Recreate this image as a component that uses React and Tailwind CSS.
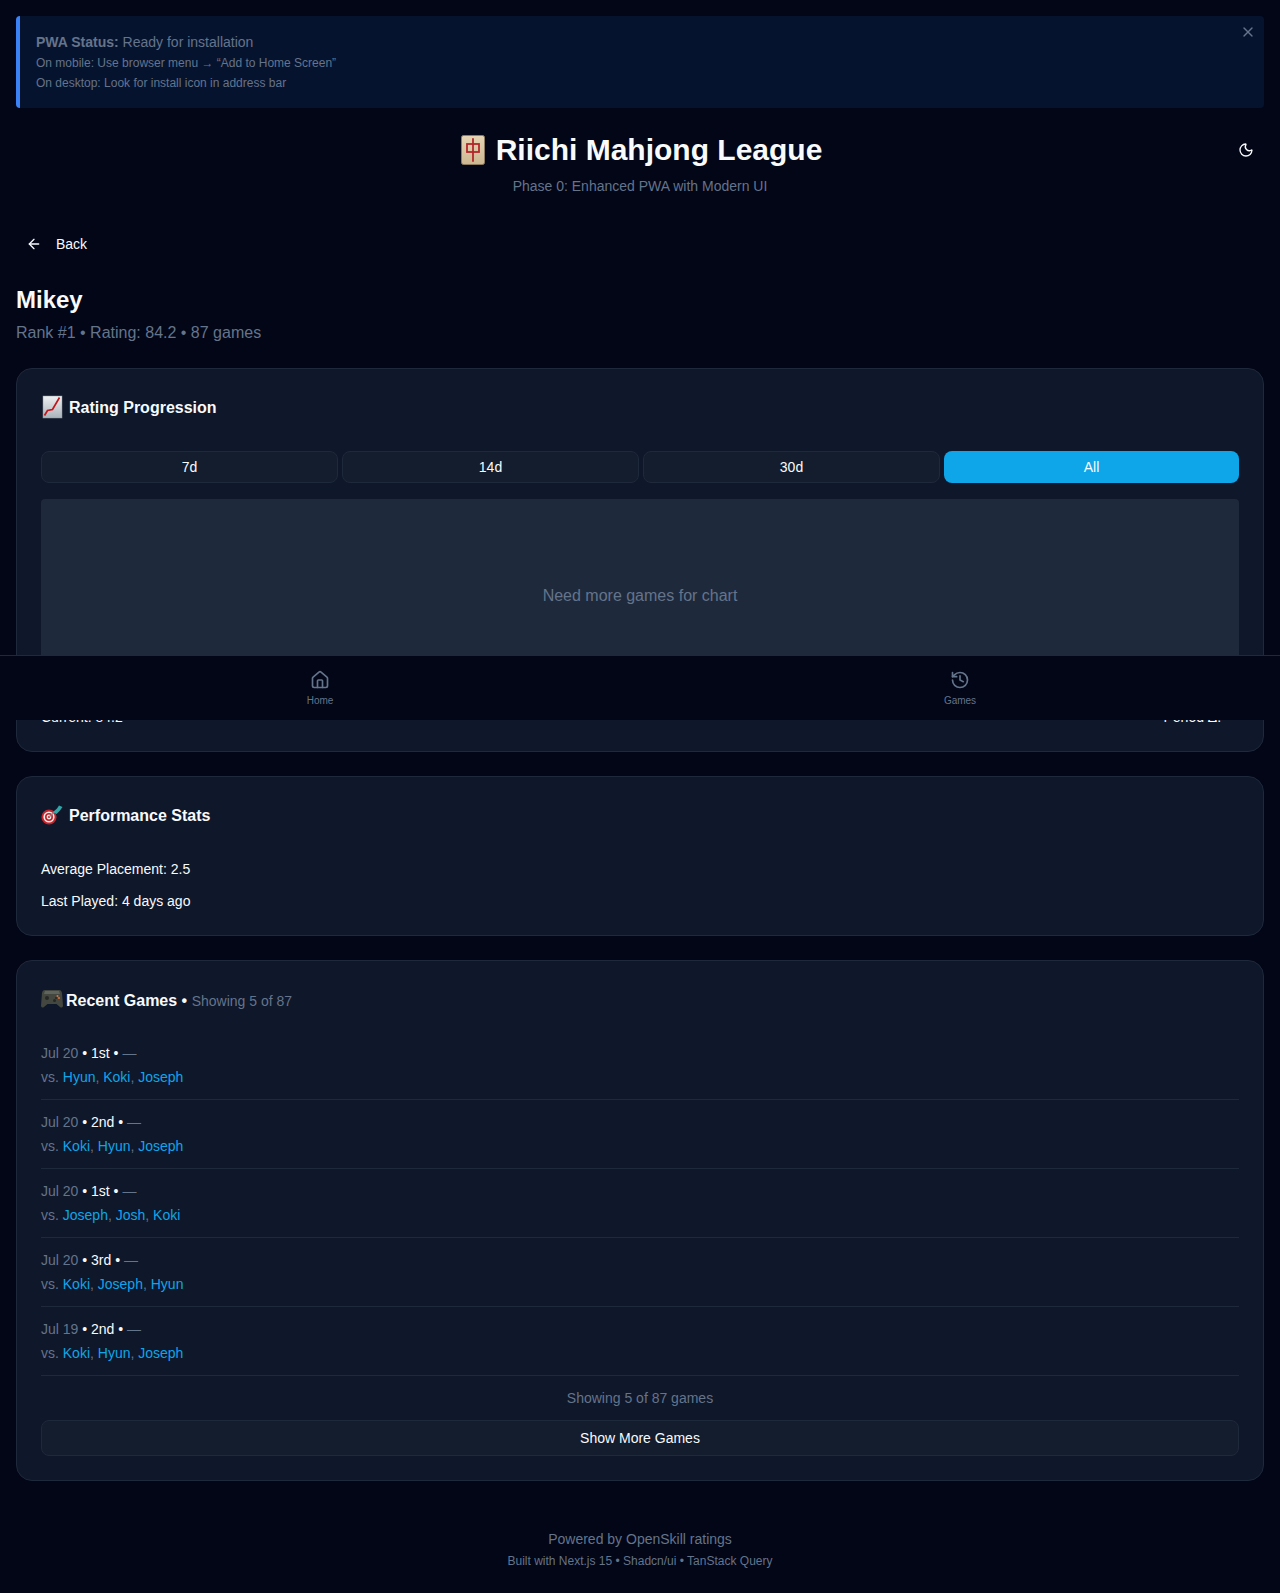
import { ArrowLeft, History, House, Moon, X } from "lucide-react";

const games = [
  { date: "Jul 20", place: "1st", opponents: ["Hyun", "Koki", "Joseph"] },
  { date: "Jul 20", place: "2nd", opponents: ["Koki", "Hyun", "Joseph"] },
  { date: "Jul 20", place: "1st", opponents: ["Joseph", "Josh", "Koki"] },
  { date: "Jul 20", place: "3rd", opponents: ["Koki", "Joseph", "Hyun"] },
  { date: "Jul 19", place: "2nd", opponents: ["Koki", "Hyun", "Joseph"] },
];

// the reference's emoji come from another emoji font, so they are drawn here
const TileIcon = () => (
  <svg viewBox="0 0 30 30" className="mr-2 h-[30px] w-[30px] shrink-0">
    <defs>
      <linearGradient id="tile" x1="0" y1="0" x2="0" y2="1">
        <stop offset="0" stopColor="#e6d4b4" />
        <stop offset="1" stopColor="#cdb792" />
      </linearGradient>
    </defs>
    <rect x="3.5" y="0.5" width="23" height="29" rx="2" fill="url(#tile)" stroke="#8d7c60" />
    <rect x="9" y="9" width="12" height="8" fill="none" stroke="#b3262b" strokeWidth="1.8" />
    <path d="M15 4v22" stroke="#b3262b" strokeWidth="1.8" strokeLinecap="round" />
  </svg>
);

const ChartIcon = () => (
  <svg viewBox="0 0 22 24" className="mr-[6px] h-6 w-[22px] shrink-0">
    <defs>
      <linearGradient id="chart" x1="0" y1="0" x2="0" y2="1">
        <stop offset="0" stopColor="#eef1f3" />
        <stop offset="1" stopColor="#aab2b9" />
      </linearGradient>
    </defs>
    <rect x="2" y="1" width="19" height="22" fill="url(#chart)" stroke="#8f98a0" strokeWidth="0.5" />
    <path d="M3.5 20.5 6.5 15.5 11.5 14.5 18.5 2.5" fill="none" stroke="#c3151b" strokeWidth="1.7" />
  </svg>
);

const DartIcon = () => (
  <svg viewBox="0 0 22 20" className="mr-[6px] h-5 w-[22px] shrink-0">
    <circle cx="8" cy="12" r="7.6" fill="#c4232b" />
    <circle cx="8" cy="12" r="5.6" fill="#f3e9e6" />
    <circle cx="8" cy="12" r="4" fill="#c4232b" />
    <circle cx="8" cy="12" r="2.4" fill="#f3e9e6" />
    <circle cx="8" cy="12" r="1.1" fill="#c4232b" />
    <path d="M8 12 14 6.500" stroke="#7d8c94" strokeWidth="1.2" />
    <path d="M12 7 16 3.500 18 0.500 21.500 2 19 5.500 15.500 9Z" fill="#2fa6a8" />
  </svg>
);

const PadIcon = () => (
  <svg viewBox="0 0 22 20" className="mr-[3px] h-5 w-[22px] shrink-0">
    <path
      d="M4 1h14c1.6 0 2.6 1 3 3l1 12.5c.1 2-1.8 2.6-3 1.5l-3.5-3h-9L3 18c-1.2 1.100-3.100.5-3-1.500L1 4c.4-2 1.400-3 3-3Z"
      fill="#43473f"
    />
    <path d="M4 2h14l1 3H3Z" fill="#5f645c" />
    <circle cx="6" cy="9" r="2" fill="#252824" />
    <circle cx="13.500" cy="11.500" r="1.500" fill="#252824" />
    <circle cx="16.500" cy="7" r="1" fill="#e2703a" />
    <circle cx="18" cy="9" r="1" fill="#e2703a" />
    <circle cx="15" cy="9" r="1" fill="#252824" />
  </svg>
);

const Card = ({ children }) => (
  <div className="rounded-2xl border border-[#1e293b] bg-[#0f172a] p-6">{children}</div>
);

const RangeButton = ({ label, active }) => (
  <button
    className={
      active
        ? "h-8 flex-1 rounded-lg bg-[#0ea5e9] text-sm text-[#f8fafc]"
        : "h-8 flex-1 rounded-lg border border-[#1e293b] bg-[#141d2e] text-sm text-[#f8fafc]"
    }
  >
    {label}
  </button>
);

const GameRow = ({ game }) => (
  <div className="border-b border-[#1e293b] py-[10px] text-sm leading-6">
    <div>
      <span className="text-[#64748b]">{game.date}</span>
      <span> • {game.place} • </span>
      <span className="text-[#64748b]">—</span>
    </div>
    <div className="text-[#64748b]">
      vs.{" "}
      {game.opponents.map((name, i) => (
        <span key={name}>
          <span className="text-[#0ea5e9]">{name}</span>
          {i < game.opponents.length - 1 && ", "}
        </span>
      ))}
    </div>
  </div>
);

const NavItem = ({ icon: Icon, label }) => (
  <div className="flex flex-1 flex-col items-center pt-[14px] text-[#64748b]">
    <Icon className="h-5 w-5" strokeWidth={2} />
    <span className="mt-[3px] text-[10px] leading-[15px]">{label}</span>
  </div>
);

export default function App() {
  return (
    <div className="relative h-[1593px] overflow-hidden bg-[#020617] p-4 font-['Liberation_Sans',Arial,sans-serif] text-[#f8fafc]">
      {/* install banner */}
      <div className="relative h-[92px] rounded border-l-4 border-[#3b82f6] bg-[#06132f] p-4">
        <p className="text-sm leading-5 text-[#64748b]">
          <strong>PWA Status:</strong> Ready for installation
        </p>
        <p className="mt-px text-xs leading-5 text-[#64748b]">On mobile: Use browser menu → “Add to Home Screen”</p>
        <p className="text-xs leading-5 text-[#64748b]">On desktop: Look for install icon in address bar</p>
        <X className="absolute top-2 right-2 h-4 w-4 text-[#64748b]" />
      </div>

      {/* header */}
      <div className="relative mt-6 text-center">
        <h1 className="flex items-center justify-center text-3xl leading-9 font-bold">
          <TileIcon />
          Riichi Mahjong League
        </h1>
        <p className="mt-2 text-sm leading-5 text-[#64748b]">Phase 0: Enhanced PWA with Modern UI</p>
        <Moon className="absolute top-[10px] right-[10px] h-4 w-4" />
      </div>

      <div className="mt-[30px] flex h-9 items-center pl-[10px] text-sm">
        <ArrowLeft className="mr-[14px] h-4 w-4" />
        Back
      </div>

      <h2 className="mt-[22px] text-2xl leading-8 font-bold">Mikey</h2>
      <p className="mt-[5px] text-base leading-6 text-[#64748b]">Rank #1 • Rating: 84.2 • 87 games</p>

      <div className="mt-[23px] flex flex-col gap-6">
        <Card>
          <h3 className="flex h-7 items-center text-base font-bold">
            <ChartIcon />
            <span className="pt-[2px]">Rating Progression</span>
          </h3>
          <div className="mt-[30px] flex gap-1">
            <RangeButton label="7d" />
            <RangeButton label="14d" />
            <RangeButton label="30d" />
            <RangeButton label="All" active />
          </div>
          <div className="mt-4 flex h-48 items-center justify-center rounded bg-[#1e293b] pt-[2px] text-base text-[#64748b]">
            Need more games for chart
          </div>
          <div className="mt-4 flex justify-between text-sm leading-5">
            <span>Current: 84.2</span>
            <span>
              Period Δ: <span className="text-[#64748b]">—</span>
            </span>
          </div>
        </Card>

        <Card>
          <h3 className="flex h-7 items-center text-base font-bold">
            <DartIcon />
            <span className="pt-[2px]">Performance Stats</span>
          </h3>
          <div className="mt-[30px] flex flex-col gap-3 text-sm leading-5">
            <p>Average Placement: 2.5</p>
            <p>Last Played: 4 days ago</p>
          </div>
        </Card>

        <Card>
          <h3 className="flex h-7 items-center text-base font-bold">
            <PadIcon />
            <span className="pt-[3px]">
              Recent Games • <span className="text-sm font-normal text-[#64748b]">Showing 5 of 87</span>
            </span>
          </h3>
          <div className="mt-[18px]">
            {games.map((game, i) => (
              <GameRow key={i} game={game} />
            ))}
          </div>
          <p className="mt-3 text-center text-sm leading-5 text-[#64748b]">Showing 5 of 87 games</p>
          <button className="mt-3 h-9 w-full rounded-lg border border-[#1e293b] bg-[#141d2e] text-sm text-[#f8fafc]">
            Show More Games
          </button>
        </Card>
      </div>

      <div className="mt-12 text-center text-[#64748b]">
        <p className="text-sm leading-5">Powered by OpenSkill ratings</p>
        <p className="mt-0.5 text-xs leading-5">Built with Next.js 15 • Shadcn/ui • TanStack Query</p>
      </div>

      {/* bottom nav sits over the page content */}
      <nav className="absolute top-[655px] right-0 left-0 flex h-[65px] border-t border-[#1e293b] bg-[#020617]">
        <NavItem icon={House} label="Home" />
        <NavItem icon={History} label="Games" />
      </nav>
    </div>
  );
}
